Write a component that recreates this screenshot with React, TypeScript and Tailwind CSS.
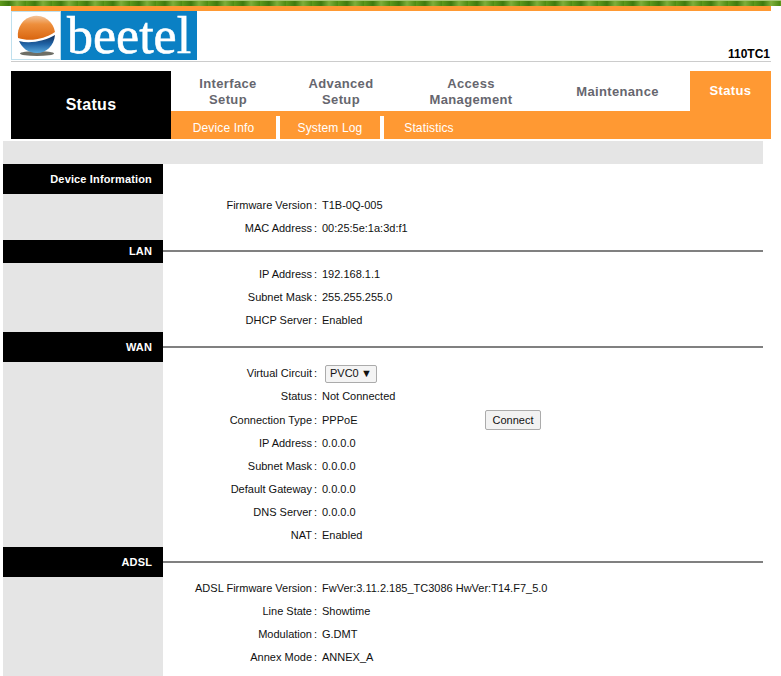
const nav = [
  { lines: ['Interface', 'Setup'], w: 'w-[114px]' },
  { lines: ['Advanced', 'Setup'], w: 'w-[112px]' },
  { lines: ['Access', 'Management'], w: 'w-[148px]' },
  { lines: ['Maintenance'], w: 'w-[145px]' },
]

const sections = [
  {
    title: 'Device Information',
    rows: [
      ['Firmware Version', 'T1B-0Q-005'],
      ['MAC Address', '00:25:5e:1a:3d:f1'],
    ],
  },
  {
    title: 'LAN',
    short: true,
    line: 'mt-[10px]',
    rows: [
      ['IP Address', '192.168.1.1'],
      ['Subnet Mask', '255.255.255.0'],
      ['DHCP Server', 'Enabled'],
    ],
  },
  {
    title: 'WAN',
    line: 'mt-[14px]',
    rows: [
      ['Virtual Circuit', 'select'],
      ['Status', 'Not Connected'],
      ['Connection Type', 'PPPoE'],
      ['IP Address', '0.0.0.0'],
      ['Subnet Mask', '0.0.0.0'],
      ['Default Gateway', '0.0.0.0'],
      ['DNS Server', '0.0.0.0'],
      ['NAT', 'Enabled'],
    ],
  },
  {
    title: 'ADSL',
    line: 'mt-[14px]',
    rows: [
      ['ADSL Firmware Version', 'FwVer:3.11.2.185_TC3086 HwVer:T14.F7_5.0'],
      ['Line State', 'Showtime'],
      ['Modulation', 'G.DMT'],
      ['Annex Mode', 'ANNEX_A'],
    ],
  },
]

function Logo() {
  return (
    <div className="flex h-[49px] w-[186px] bg-[#0a80c4]">
      <div className="h-[49px] w-[50px] shrink-0 border border-[#bfe0ee] bg-white">
        <svg width="48" height="47" viewBox="0 0 48 47">
          <defs>
            <linearGradient id="top" x1="0" y1="0" x2="0" y2="1">
              <stop offset="0" stopColor="#f3c49a" />
              <stop offset="0.35" stopColor="#ee8f3c" />
              <stop offset="1" stopColor="#d9650f" />
            </linearGradient>
            <linearGradient id="bot" x1="0" y1="0" x2="0" y2="1">
              <stop offset="0" stopColor="#12305c" />
              <stop offset="0.5" stopColor="#1f62a4" />
              <stop offset="1" stopColor="#5aa8dc" />
            </linearGradient>
          </defs>
          <ellipse cx="25" cy="41.5" rx="17" ry="2.5" fill="#6e6e66" />
          <path d="M7 29 C18 32 33 29 43 23 C42 34 34 41 25 41 C16 41 10 36 7 29 Z" fill="url(#bot)" />
          <path d="M6 26 A18.5 19 0 0 1 43 20 C33 27 18 30 6 26 Z" fill="url(#top)" />
        </svg>
      </div>
      <span className="ml-[6px] font-['Liberation_Serif',serif] text-[52px] leading-[49px] text-white [-webkit-text-stroke:0.6px_white]">beetel</span>
    </div>
  )
}

function Row({ label, value }: { label: string; value: string }) {
  return (
    <div className={`flex items-center ${value === 'PPPoE' ? 'h-[24px]' : 'h-[23px]'}`}>
      <span className="w-[149px] text-right">{label}</span>
      <span className="w-[7px] text-center">:</span>
      {value === 'select' ? (
        <span className="ml-[6px] flex h-[18px] w-[52px] items-center justify-between rounded-[2px] border border-[#ababab] bg-[#f4f4f4] pr-[4px] pl-[4px]">
          PVC0
          <span className="text-[11px]">▼</span>
        </span>
      ) : (
        <span className="ml-[3px] w-[163px] whitespace-nowrap">{value}</span>
      )}
      {value === 'PPPoE' && (
        <button className="h-[20px] w-[56px] rounded-[2px] border border-[#ababab] bg-[#f2f2f2] text-[11px]">Connect</button>
      )}
    </div>
  )
}

export default function App() {
  return (
    <div className="h-[676px] w-[781px] overflow-hidden bg-white font-['Liberation_Sans',Arial,sans-serif] text-[11px] text-[#111]">
      <div className="h-[6px] border-t border-[#a8c878] bg-[repeating-linear-gradient(90deg,#5f9a1c_0px,#3f7a0e_9px,#7fae3a_17px,#4d8a12_26px)]" />
      <div className="mr-[10px] ml-[11px] h-[5px] bg-[#ff9933]" />
      <div className="mr-[10px] ml-[11px] flex h-[51px] items-start justify-between border-b border-[#cccccc]">
        <Logo />
        <span className="mt-[36px] pr-[1px] text-[12px] leading-[14px] font-bold text-black">110TC1</span>
      </div>
      <div className="mt-[9px] mr-[10px] ml-[11px] flex h-[68px]">
        <div className="flex w-[160px] items-center justify-center bg-black text-[16px] font-bold tracking-[0.3px] text-white">Status</div>
        <div className="flex w-[600px] flex-col">
          <div className="flex h-[40px] text-[13px] leading-[16px] font-bold tracking-[0.35px] text-[#66666e]">
            {nav.map(n => (
              <div key={n.lines[0]} className={`${n.w} flex flex-col items-center justify-center pt-[1px]`}>
                {n.lines.map(l => <span key={l}>{l}</span>)}
              </div>
            ))}
            <div className="flex w-[81px] items-center justify-center bg-[#ff9933] text-white">Status</div>
          </div>
          <div className="flex h-[28px] items-end bg-[#ff9933] text-[12px] tracking-[0.15px] text-white">
            <div className="flex h-[23px] w-[109px] items-center justify-center border-r-4 border-white">Device Info</div>
            <div className="flex h-[23px] w-[104px] items-center justify-center border-r-4 border-white">System Log</div>
            <div className="flex h-[23px] w-[90px] items-center justify-center">Statistics</div>
          </div>
        </div>
      </div>
      <div className="mx-[3px] mt-[2px] h-[23px] w-[760px] bg-[#e5e5e5]" />
      <div className="mx-[3px] w-[760px]">
        {sections.map(s => (
          <div key={s.title}>
            <div className={`flex ${s.short ? 'h-[23px]' : 'h-[30px]'}`}>
              <div className="flex w-[160px] items-center justify-end bg-black pr-[11px] font-bold tracking-[0.15px] text-white">{s.title}</div>
              {s.line && <div className={`${s.line} h-[2px] flex-1 bg-[#808080]`} />}
            </div>
            <div className="flex">
              <div className="w-[160px] bg-[#e5e5e5]" />
              <div className={`flex-1 ${s.title === 'ADSL' ? 'pb-[10px]' : ''}`}>
                {s.rows.map(([label, value]) => <Row key={label} label={label} value={value} />)}
              </div>
            </div>
          </div>
        ))}
      </div>
    </div>
  )
}
